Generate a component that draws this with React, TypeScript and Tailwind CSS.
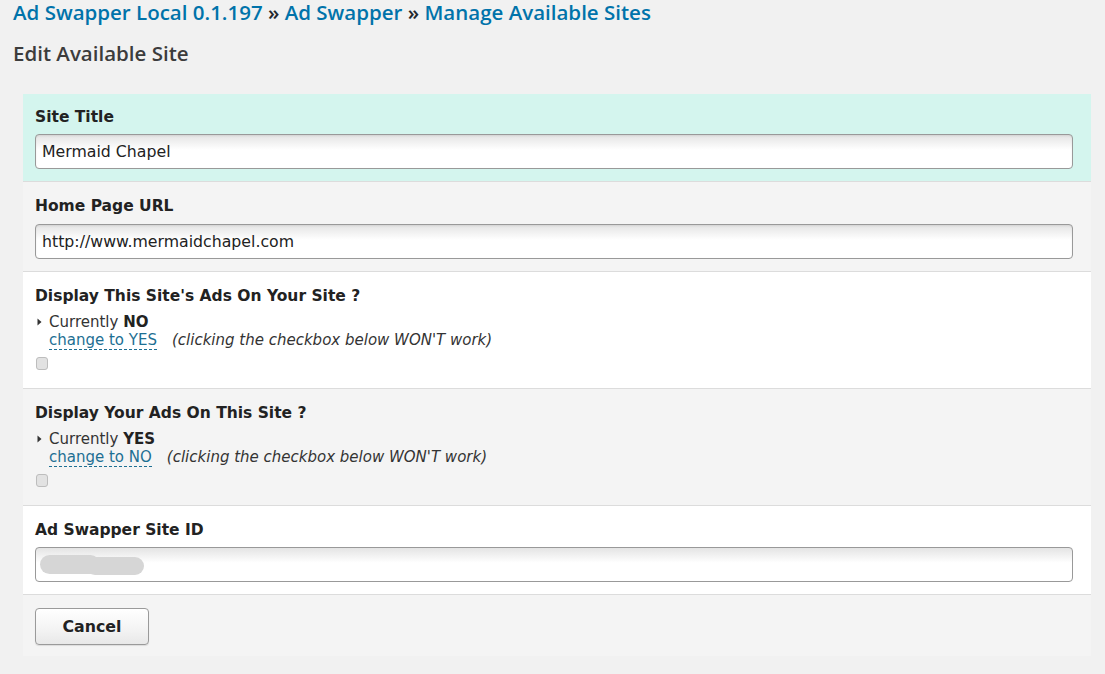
import React from "react";

const body = { fontFamily: '"DejaVu Sans", "Liberation Sans", sans-serif' };
const head = { fontFamily: '"Open Sans", "Noto Sans", sans-serif' };

function Input({ value, first }: { value: string; first?: boolean }) {
  return (
    <div
      className={
        (first ? "mt-[6px] " : "mt-[7px] ") +
        "h-[35px] rounded-[4px] border border-[#999] bg-[linear-gradient(#e4e4e4,#ffffff_45%,#ffffff)] shadow-[inset_0_1px_2px_rgba(0,0,0,0.08)] flex items-center px-[6px] text-[15.75px] text-[#222]"
      }
    >
      {value}
    </div>
  );
}

function Label({ children }: { children: React.ReactNode }) {
  return <div className="text-[15.5px] leading-[22px] font-bold text-[#222]">{children}</div>;
}

function Triangle() {
  return (
    <svg width="5" height="8" viewBox="0 0 5 8" className="mr-[7px] ml-[2px] shrink-0">
      <path d="M0.5 0.5 L4.5 4 L0.5 7.5 Z" fill="#333" />
    </svg>
  );
}

function Toggle({ current, change }: { current: string; change: string }) {
  return (
    <div className="mt-[6px] text-[15px] leading-[18px] text-[#333]">
      <div className="flex items-center">
        <Triangle />
        <span>
          Currently <b className="text-[#222]">{current}</b>
        </span>
      </div>
      <div className="pl-[14px]">
        <span className="text-[#1d6f93] border-b border-dashed border-[#1d6f93]">change to {change}</span>
        <i className="ml-[15px] text-[#333]">(clicking the checkbox below WON'T work)</i>
      </div>
      <div className="mt-[8px] ml-[1px] w-[12px] h-[13px] rounded-[3px] border border-[#bdbdbd] bg-[#e2e2e2]" />
    </div>
  );
}

export default function App() {
  return (
    <div className="min-h-[674px] bg-[#f1f1f1] pb-[17px]" style={body}>
      <div className="px-[13px] pt-0 text-[20.5px] leading-[24px] font-semibold text-[#0073aa]" style={head}>
        <span>Ad Swapper Local 0.1.197</span>
        <span className="text-[#23282d]"> » </span>
        <span>Ad Swapper</span>
        <span className="text-[#23282d]"> » </span>
        <span>Manage Available Sites</span>
      </div>
      <div className="px-[13px] mt-[17px] text-[20.5px] leading-[24px] font-semibold text-[#3c3c3c]" style={head}>
        Edit Available Site
      </div>
      <div className="ml-[23px] mr-[14px] mt-[29px]">
        <div className="bg-[#d4f5ee] border-b border-[#dcdcdc] pl-[12px] pr-[18px] pt-[12px] pb-[12px]">
          <Label>Site Title</Label>
          <Input value="Mermaid Chapel" first />
        </div>
        <div className="bg-[#f4f4f4] border-b border-[#dcdcdc] pl-[12px] pr-[18px] pt-[13px] pb-[12px]">
          <Label>Home Page URL</Label>
          <Input value="http://www.mermaidchapel.com" />
        </div>
        <div className="bg-white border-b border-[#dcdcdc] pl-[12px] pr-[18px] pt-[13px] pb-[18px]">
          <Label>Display This Site's Ads On Your Site ?</Label>
          <Toggle current="NO" change="YES" />
        </div>
        <div className="bg-[#f4f4f4] border-b border-[#dcdcdc] pl-[12px] pr-[18px] pt-[13px] pb-[18px]">
          <Label>Display Your Ads On This Site ?</Label>
          <Toggle current="YES" change="NO" />
        </div>
        <div className="bg-white border-b border-[#dcdcdc] pl-[12px] pr-[18px] pt-[13px] pb-[12px]">
          <Label>Ad Swapper Site ID</Label>
          <div className="mt-[6px] h-[35px] rounded-[4px] border border-[#999] bg-[linear-gradient(#e4e4e4,#ffffff_45%,#ffffff)] flex items-center px-[4px]">
            <div className="flex items-center">
              <div className="w-[60px] h-[19px] rounded-[10px] bg-[#d6d6d6]" />
              <div className="-ml-[14px] mt-[3px] w-[58px] h-[18px] rounded-[10px] bg-[#d6d6d6]" />
            </div>
          </div>
        </div>
        <div className="bg-[#f4f4f4] pl-[12px] pt-[13px] pb-[11px]">
          <button
            className="w-[114px] h-[37px] rounded-[4px] border border-[#9a9a9a] bg-[linear-gradient(#ffffff,#f3f3f3_60%,#e8e8e8)] shadow-[0_1px_1px_rgba(0,0,0,0.1)] text-[15.8px] font-bold text-[#222]"
            style={body}
          >
            Cancel
          </button>
        </div>
      </div>
    </div>
  );
}
